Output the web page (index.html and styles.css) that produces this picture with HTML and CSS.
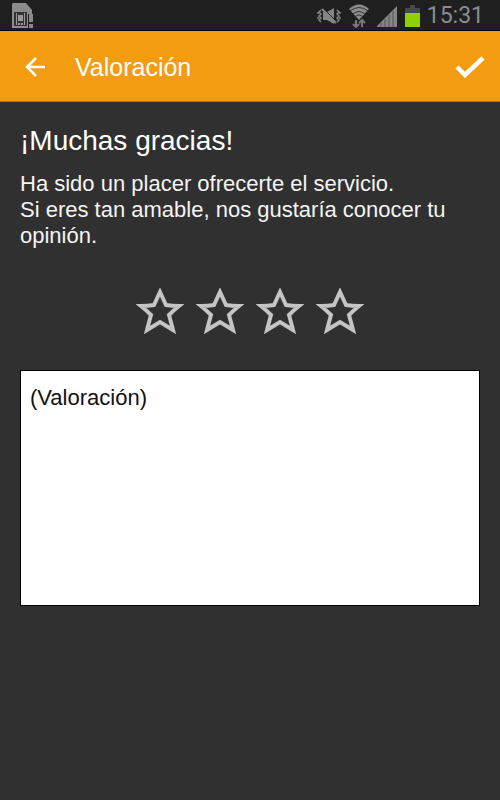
FILE: index.html
```html
<!DOCTYPE html>
<html lang="es">
<head>
	<meta charset="UTF-8">
	<meta name="viewport" content="width=device-width, initial-scale=1">
	<title>Valoración</title>
	<link rel="stylesheet" href="styles.css">
</head>
<body>
	<!-- barra de estado -->
	<div class="status">
		<svg class="sim" width="22" height="26" viewBox="0 0 22 26">
			<path d="M1 0H14L20 7V11H16V25H0V1Z" fill="#8c8c8c"/>
			<path d="M2 9H15V23H2Z" fill="#333"/>
			<path d="M4 10H5V22H4ZM12 10H13V22H12ZM6 12H11V18H6ZM6 20H8V22H6ZM9 20H11V22H9Z" fill="#999"/>
			<path d="M17 11H21V19H17ZM17 21H21V25H17Z" fill="#888"/>
		</svg>
		<div class="status-icons">
			<svg width="24" height="18" viewBox="0 0 24 18">
				<path d="M6 5H10L17 1V17L10 13H6Z" fill="#858585"/>
				<path d="M6 1L20 15" stroke="#1f1f1f" stroke-width="1"/>
				<path d="M5 2L19 16" stroke="#858585" stroke-width="2"/>
				<path d="M4 3L2 5L4 7L2 9L4 11L2 13L4 15M1 5V7M1 10V12M20 3L22 5L20 7L22 9L20 11L22 13L20 15M23 5V7M23 10V12" fill="none" stroke="#858585" stroke-width="1.5"/>
			</svg>
			<svg width="20" height="24" viewBox="0 0 20 24">
				<path d="M0 5Q10 -4 20 5L10 16Z" fill="#8c8c8c"/>
				<path d="M1 7Q10 0 19 7M4 10Q10 5 16 10M6 13Q10 9 14 13" fill="none" stroke="#333" stroke-width="1"/>
				<path d="M7 16V23M4 20L7 23L10 20M13 23V16M10 19L13 16L16 19" fill="none" stroke="#777" stroke-width="2"/>
			</svg>
			<svg width="20" height="21" viewBox="0 0 20 21">
				<path d="M0 21V20L20 0V21Z" fill="#858585"/>
				<path d="M4 17V21M8 13V21M12 9V21M16 5V21" stroke="#555" stroke-width="1"/>
			</svg>
			<svg width="15" height="22" viewBox="0 0 15 22">
				<path d="M5 0H10V3H15V9H0V3H5Z" fill="#484848"/>
				<path d="M0 8H15V22H0Z" fill="#90d000"/>
			</svg>
			<span class="time">15:31</span>
		</div>
	</div>

	<form class="page">
		<header class="topbar">
			<button type="button" class="icon-btn" aria-label="Volver">
				<svg width="20" height="20" viewBox="0 0 20 20">
					<path d="M20 10H2M11 1L2 10L11 19" fill="none" stroke="#fff" stroke-width="2.5"/>
				</svg>
			</button>
			<h1>Valoración</h1>
			<button type="submit" class="icon-btn send" aria-label="Enviar">
				<svg width="30" height="22" viewBox="0 0 30 22">
					<path d="M2 11L10 19L28 2" fill="none" stroke="#fff" stroke-width="4.5"/>
				</svg>
			</button>
		</header>

		<main class="content">
			<h2>¡Muchas gracias!</h2>
			<p>Ha sido un placer ofrecerte el servicio.<br>Si eres tan amable, nos gustaría conocer tu opinión.</p>

			<div class="stars" role="radiogroup" aria-label="Estrellas">
				<label>
					<input type="radio" name="stars" value="1" aria-label="1 estrella">
					<svg viewBox="0 0 48 46"><path d="M24 4L30 17Q36 18 43 18Q38 22 33 27Q35 34 37 42L24 34L11 42Q13 34 15 27Q10 22 5 18Q12 18 18 17Z"/></svg>
				</label>
				<label>
					<input type="radio" name="stars" value="2" aria-label="2 estrellas">
					<svg viewBox="0 0 48 46"><path d="M24 4L30 17Q36 18 43 18Q38 22 33 27Q35 34 37 42L24 34L11 42Q13 34 15 27Q10 22 5 18Q12 18 18 17Z"/></svg>
				</label>
				<label>
					<input type="radio" name="stars" value="3" aria-label="3 estrellas">
					<svg viewBox="0 0 48 46"><path d="M24 4L30 17Q36 18 43 18Q38 22 33 27Q35 34 37 42L24 34L11 42Q13 34 15 27Q10 22 5 18Q12 18 18 17Z"/></svg>
				</label>
				<label>
					<input type="radio" name="stars" value="4" aria-label="4 estrellas">
					<svg viewBox="0 0 48 46"><path d="M24 4L30 17Q36 18 43 18Q38 22 33 27Q35 34 37 42L24 34L11 42Q13 34 15 27Q10 22 5 18Q12 18 18 17Z"/></svg>
				</label>
			</div>

			<textarea class="comment" rows="8" placeholder="(Valoración)" aria-label="Valoración"></textarea>
		</main>
	</form>
</body>
</html>
```

FILE: styles.css
```css
*{box-sizing:border-box;}
body{margin:0;min-height:100vh;background:#303030;color:#fff;font-family:"Liberation Sans",Arial,sans-serif;}
h1,h2,p{margin:0;font-weight:normal;}
svg{display:block;}

.status{display:flex;align-items:center;justify-content:space-between;height:31px;padding:2px 16px 0 12px;background:#1f1f1f;border-bottom:1px solid #00001c;}
.status-icons{display:flex;align-items:center;gap:8px;}
.time{margin-left:-1px;color:#8c8c8c;font:23px/28px Roboto,sans-serif;}

.topbar{display:flex;align-items:center;height:71px;padding:1px 15px 0 25px;background:#f39c12;border-bottom:1px solid #a87420;}
.topbar h1{flex:1;padding-left:30px;font-size:25px;line-height:30px;}
.icon-btn{padding:0;border:0;background:none;cursor:pointer;}

.content{padding:23px 20px;}
.content h2{font-size:28px;line-height:32px;}
.content p{margin-top:14px;font-size:22px;line-height:26px;color:#f4f4f4;}

.stars{display:flex;justify-content:center;gap:12px;margin:39px 0 36px;}
.stars label{position:relative;width:48px;cursor:pointer;}
.stars input{position:absolute;opacity:0;margin:0;}
.stars path{fill:none;stroke:#c4c4c4;stroke-width:4;stroke-linejoin:miter;}
.stars input:checked + svg path{fill:#f39c12;}
.stars input:focus-visible + svg{outline:1px solid #fff;}

.comment{display:block;width:100%;padding:14px 9px 12px;border:1px solid #000;border-radius:0;background:#fff;color:#111;font:22px/26px "Liberation Sans",Arial,sans-serif;resize:none;}
.comment::placeholder{color:#111;opacity:1;}
```
